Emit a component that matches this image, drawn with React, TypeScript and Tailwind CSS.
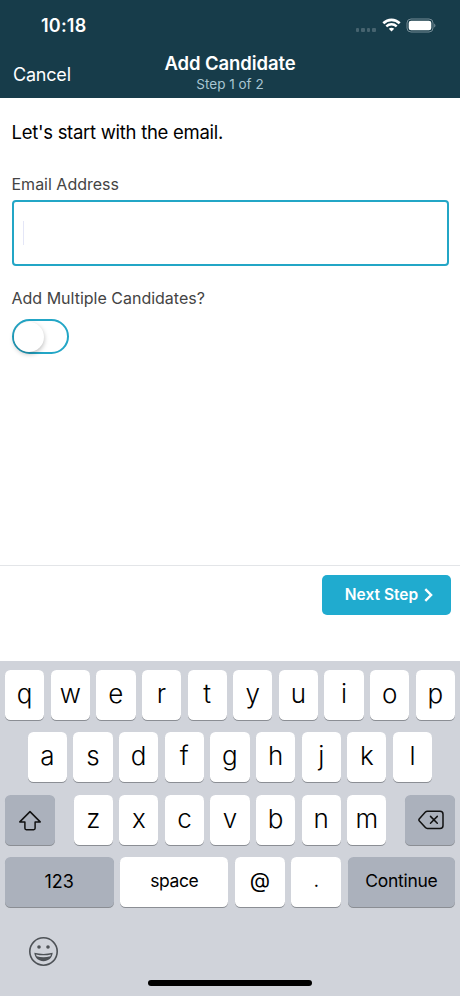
import { useState, type ReactNode } from 'react';

const TOP_ROW = ['q', 'w', 'e', 'r', 't', 'y', 'u', 'i', 'o', 'p'];
const HOME_ROW = ['a', 's', 'd', 'f', 'g', 'h', 'j', 'k', 'l'];
const BOTTOM_ROW = ['z', 'x', 'c', 'v', 'b', 'n', 'm'];

function StatusBar() {
  return (
    <div className="flex h-[50px] items-start justify-between pl-[41px] pr-[23.5px]">
      <span className="mt-[14px] text-[18px] leading-6 font-semibold tracking-[0.2px]">10:18</span>
      <div className="mt-[17px] flex items-start">
        <div className="mt-[11px] flex gap-[2px]">
          {[0, 1, 2, 3].map((i) => <span key={i} className="h-1 w-[3.5px] rounded-[1px] bg-[#46636f]" />)}
        </div>
        <svg className="mt-[1px] ml-[6px]" width="19" height="14" viewBox="0 0 19 14" fill="none">
          <path d="M1.3 5.3C6 .7 13 .7 17.7 5.3" stroke="white" strokeWidth="2.6" />
          <path d="M4.3 8.4C7.3 5.6 11.7 5.6 14.7 8.4" stroke="white" strokeWidth="2.4" />
          <path d="M9.5 13.6 6.8 10.8C8.3 9.4 10.7 9.4 12.2 10.8Z" fill="white" />
        </svg>
        <svg className="mt-[1px] ml-[5px]" width="31" height="15" viewBox="0 0 31 15" fill="none">
          <rect x="1" y="1" width="26" height="13" rx="4" stroke="#748b95" strokeWidth="1" />
          <rect x="2.7" y="2.7" width="22.6" height="9.6" rx="2.4" fill="white" />
          <path d="M28.2 5.4C29.9 6.2 29.9 8.8 28.2 9.6Z" fill="#748b95" />
        </svg>
      </div>
    </div>
  );
}

function Header() {
  return (
    <header className="h-[98px] bg-[#173c4a] text-white">
      <StatusBar />
      <div className="grid h-[48px] grid-cols-3">
        <button className="mt-[13px] h-6 pl-[13px] text-left text-[18px] leading-6 tracking-[-0.2px]">Cancel</button>
        <div className="flex flex-col items-center whitespace-nowrap">
          <h1 className="mt-[1px] text-[18.5px] leading-6 font-semibold tracking-[-0.1px]">Add Candidate</h1>
          <p className="text-[13.5px] leading-[18px] text-[#a9c6d2]">Step 1 of 2</p>
        </div>
      </div>
    </header>
  );
}

function Key({ children, className = '', dark = false }: { children: ReactNode; className?: string; dark?: boolean }) {
  return (
    <button
      className={`flex h-[50px] items-center justify-center rounded-[5.5px] shadow-[0_1px_0_#8b8e94] ${dark ? 'bg-[#abb1bc]' : 'bg-white'} ${className}`}
    >
      {children}
    </button>
  );
}

function Letter({ char }: { char: string }) {
  return (
    <Key className="w-[39.3px]">
      <span className="-mt-0.5 text-[26px] leading-8 font-light">{char}</span>
    </Key>
  );
}

function Keyboard() {
  return (
    <div className="flex h-[335px] flex-col bg-[#d0d3da] px-[5px] pt-[9px] text-black">
      <div className="flex flex-col gap-[12.3px]">
        <div className="flex justify-between">
          {TOP_ROW.map((c) => <Letter key={c} char={c} />)}
        </div>
        <div className="flex justify-between px-[22.8px]">
          {HOME_ROW.map((c) => <Letter key={c} char={c} />)}
        </div>
        <div className="flex justify-between">
          <Key dark className="w-[49.5px]">
            <svg className="mt-[2px] ml-[1px]" width="24" height="22" viewBox="0 0 24 22" fill="none" stroke="#111" strokeWidth="1.5" strokeLinejoin="round">
              <path d="M12 1.6 22.2 11.9H17.1V18.3Q17.1 19.7 15.7 19.7H8.3Q6.9 19.7 6.9 18.3V11.9H1.8Z" />
            </svg>
          </Key>
          <div className="flex gap-[6.3px]">
            {BOTTOM_ROW.map((c) => <Letter key={c} char={c} />)}
          </div>
          <Key dark className="w-[49.5px]">
            <svg className="mt-[1px] ml-[1px]" width="26" height="20" viewBox="0 0 26 20" fill="none" stroke="#111" strokeWidth="1.5" strokeLinecap="round" strokeLinejoin="round">
              <path d="M9.4 1.2H22Q25 1.2 25 4.2V15.5Q25 18.5 22 18.5H9.4Q8.2 18.5 7.4 17.6L1.4 11.1Q.4 9.9 1.4 8.7L7.4 2.1Q8.2 1.2 9.4 1.2Z" />
              <path d="M12.5 6.4 19.3 13.3M19.3 6.4 12.5 13.3" />
            </svg>
          </Key>
        </div>
        <div className="flex justify-between">
          <Key dark className="w-[108.5px]"><span className="text-[18px]">123</span></Key>
          <Key className="w-[108px]"><span className="-mt-0.5 text-[17.5px] tracking-[-0.4px]">space</span></Key>
          <Key className="w-[49.7px]"><span className="-mt-0.5 text-[21px]">@</span></Key>
          <Key className="w-[49.7px]"><span className="-mt-0.5 text-[18px]">.</span></Key>
          <Key dark className="w-[107.2px]"><span className="-mt-0.5 text-[17.5px] tracking-[-0.3px]">Continue</span></Key>
        </div>
      </div>
      <svg className="mt-[29px] ml-[23px]" width="31" height="31" viewBox="0 0 31 31" fill="none">
        <circle cx="15.5" cy="15.5" r="13.7" stroke="#4e5257" strokeWidth="1.6" />
        <circle cx="11" cy="11" r="1.8" fill="#4e5257" />
        <circle cx="20" cy="11" r="1.8" fill="#4e5257" />
        <path d="M6.3 16.8Q15.5 19 24.7 16.8C24.2 22 20.4 25.2 15.5 25.2S6.8 22 6.3 16.8Z" fill="#4e5257" />
        <path d="M7.9 18.5Q15.5 20.2 23.1 18.5L22.3 20.3Q15.5 22.1 8.7 20.3Z" fill="#d0d3da" />
      </svg>
      <div className="mt-[13px] h-[6px] w-[164px] self-center rounded-full bg-black" />
    </div>
  );
}

export default function App() {
  const [email, setEmail] = useState('');
  const [multiple, setMultiple] = useState(false);

  return (
    <div className="flex h-[996px] w-[460px] flex-col overflow-hidden bg-white font-['Inter',sans-serif]">
      <Header />
      <main className="h-[467px] px-[11.5px] pt-[21px]">
        <p className="text-[18.5px] leading-[26px] tracking-[-0.28px] text-black">Let's start with the email.</p>
        <label className="mt-[28px] block text-[16px] leading-[22px] text-[#444]" htmlFor="email">Email Address</label>
        <div className="mt-[5px] flex h-[66px] items-center rounded-[4px] border-2 border-[#23a6c6] px-[9px]">
          <span className="h-6 w-px bg-[#e4e6f7]" />
          <input id="email" className="min-w-0 flex-1 outline-none" value={email} onChange={(e) => setEmail(e.target.value)} />
        </div>
        <p className="mt-[21px] text-[16px] leading-[22px] text-[#444]">Add Multiple Candidates?</p>
        <button
          className="mt-[10px] flex h-[35px] w-[57px] items-center rounded-full border-2 border-[#23a6c6]"
          role="switch"
          aria-checked={multiple}
          onClick={() => setMultiple(!multiple)}
        >
          <span className={`h-[30px] w-[30px] rounded-full bg-white shadow-[0_2px_5px_rgba(0,0,0,0.28)] ${multiple ? 'ml-[23px]' : ''}`} />
        </button>
      </main>
      <footer className="flex h-[96px] items-start justify-end border-t border-[#e3e5e8] pt-[9px] pr-[9px]">
        <button className="flex h-[40px] w-[129px] items-center justify-center gap-[6px] rounded-[5px] bg-[#20abcf] pl-[5px] text-white">
          <span className="-mt-px text-[15.5px] font-semibold">Next Step</span>
          <svg className="-mt-px" width="9" height="14" viewBox="0 0 9 14" fill="none" stroke="white" strokeWidth="2.4">
            <path d="M1.3 1.2 7.1 7 1.3 12.8" />
          </svg>
        </button>
      </footer>
      <Keyboard />
    </div>
  );
}
